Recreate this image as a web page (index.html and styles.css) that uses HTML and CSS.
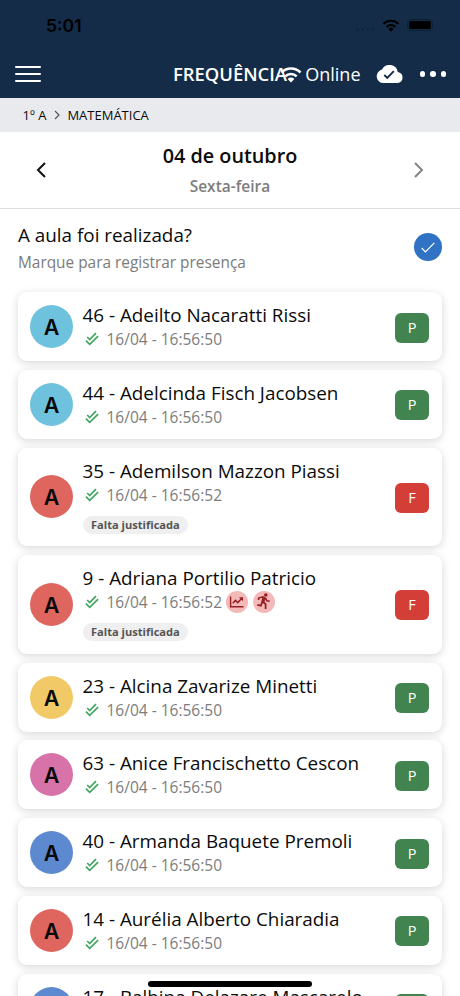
FILE: index.html
```html
<!DOCTYPE html>
<html lang="pt-BR">

<head>
    <meta charset="UTF-8">
    <meta name="viewport" content="width=device-width, initial-scale=1.0">
    <title>Frequência</title>
    <link rel="stylesheet" href="styles.css">
</head>

<body>
    <!-- Ícones reutilizados -->
    <svg class="sprite">
        <symbol id="wifi" viewBox="0 0 24 18">
            <path d="M1.6 6.8a14.6 14.6 0 0 1 20.8 0M5.8 11a8.8 8.8 0 0 1 12.4 0" fill="none" stroke="currentColor" stroke-width="2.8" />
            <path d="M12 17.6l-3.6-3.8a5 5 0 0 1 7.2 0z" fill="currentColor" />
        </symbol>
        <symbol id="done" viewBox="0 0 14 14">
            <path d="M2.2 5l2.5 2.5L11 1.2M.9 8.6l3.8 3.8 8.4-8.3" fill="none" stroke="#43a562" stroke-width="1.7" />
        </symbol>
    </svg>

    <header class="topbar">
        <div class="status">
            <span class="clock">5:01</span>
            <div class="status-icons">
                <span class="signal"><i></i><i></i><i></i><i></i></span>
                <svg class="status-wifi"><use href="#wifi" /></svg>
                <span class="battery"></span>
            </div>
        </div>
        <nav class="nav">
            <div class="menu"><span></span><span></span><span></span></div>
            <h1>FREQUÊNCIA</h1>
            <div class="actions">
                <svg class="wifi"><use href="#wifi" /></svg>
                <span class="online">Online</span>
                <svg class="cloud" viewBox="0 0 27 18">
                    <path d="M21.8 6.9A8.4 8.4 0 0 0 6 4.6 6.8 6.8 0 0 0 6.8 18H21.4a5.6 5.6 0 0 0 .4-11.1z" fill="#fff" />
                    <path d="M8.3 10l3 3 6.5-6.8" fill="none" stroke="#142c48" stroke-width="1.9" />
                </svg>
                <div class="more"><span></span><span></span><span></span></div>
            </div>
        </nav>
    </header>

    <div class="breadcrumb">
        <span>1º A</span>
        <svg viewBox="0 0 6 10"><path d="M1 1l4 4-4 4" /></svg>
        <span>MATEMÁTICA</span>
    </div>

    <section class="date">
        <svg class="prev" viewBox="0 0 10 16"><path d="M9 1L2 8l7 7" /></svg>
        <div class="date-text">
            <h2>04 de outubro</h2>
            <p>Sexta-feira</p>
        </div>
        <svg class="next" viewBox="0 0 10 16"><path d="M1 1l7 7-7 7" /></svg>
    </section>

    <section class="question">
        <div>
            <h3>A aula foi realizada?</h3>
            <p>Marque para registrar presença</p>
        </div>
        <div class="check">
            <svg viewBox="0 0 14 11"><path d="M.7 6l3.7 4L13.3.9" /></svg>
        </div>
    </section>

    <!-- Lista de alunos -->
    <main class="list">
        <div class="card">
            <div class="avatar cyan">A</div>
            <div class="info">
                <div class="name">46 - Adeilto Nacaratti Rissi</div>
                <div class="time"><svg class="done"><use href="#done" /></svg><span>16/04 - 16:56:50</span></div>
            </div>
            <div class="mark present">P</div>
        </div>
        <div class="card">
            <div class="avatar cyan">A</div>
            <div class="info">
                <div class="name">44 - Adelcinda Fisch Jacobsen</div>
                <div class="time"><svg class="done"><use href="#done" /></svg><span>16/04 - 16:56:50</span></div>
            </div>
            <div class="mark present">P</div>
        </div>
        <div class="card tall">
            <div class="avatar red">A</div>
            <div class="info">
                <div class="name">35 - Ademilson Mazzon Piassi</div>
                <div class="time"><svg class="done"><use href="#done" /></svg><span>16/04 - 16:56:52</span></div>
                <div class="tag">Falta justificada</div>
            </div>
            <div class="mark absent">F</div>
        </div>
        <div class="card tall">
            <div class="avatar red">A</div>
            <div class="info">
                <div class="name">9 - Adriana Portilio Patricio</div>
                <div class="time">
                    <svg class="done"><use href="#done" /></svg><span>16/04 - 16:56:52</span>
                    <div class="flags">
                        <svg viewBox="0 0 22 22">
                            <path d="M4.6 5.5v10.2h12.9" fill="none" stroke="#962024" stroke-width="1.4" />
                            <path d="M6.8 12.2l2.5-2.8 2.4 2.2 4-4.2" fill="none" stroke="#962024" stroke-width="1.5" />
                            <path d="M13 6.2h4v4z" fill="#962024" />
                        </svg>
                        <svg viewBox="0 0 22 22">
                            <circle cx="12.8" cy="4" r="1.8" fill="#962024" />
                            <path d="M5.6 9V7l4.3-1.2 2.7 1.6 1.3 2.4 2.8.5" fill="none" stroke="#962024" stroke-width="1.6" />
                            <path d="M9.4 6l3.2 1.5-1.3 4.2-3.1-.7z" fill="#962024" />
                            <path d="M9.4 10.7l3.2 2.2v5M9.2 11l-1.3 3.6-3.6-.7" fill="none" stroke="#962024" stroke-width="1.8" />
                        </svg>
                    </div>
                </div>
                <div class="tag">Falta justificada</div>
            </div>
            <div class="mark absent">F</div>
        </div>
        <div class="card">
            <div class="avatar yellow">A</div>
            <div class="info">
                <div class="name">23 - Alcina Zavarize Minetti</div>
                <div class="time"><svg class="done"><use href="#done" /></svg><span>16/04 - 16:56:50</span></div>
            </div>
            <div class="mark present">P</div>
        </div>
        <div class="card">
            <div class="avatar pink">A</div>
            <div class="info">
                <div class="name">63 - Anice Francischetto Cescon</div>
                <div class="time"><svg class="done"><use href="#done" /></svg><span>16/04 - 16:56:50</span></div>
            </div>
            <div class="mark present">P</div>
        </div>
        <div class="card">
            <div class="avatar blue">A</div>
            <div class="info">
                <div class="name">40 - Armanda Baquete Premoli</div>
                <div class="time"><svg class="done"><use href="#done" /></svg><span>16/04 - 16:56:50</span></div>
            </div>
            <div class="mark present">P</div>
        </div>
        <div class="card">
            <div class="avatar red">A</div>
            <div class="info">
                <div class="name">14 - Aurélia Alberto Chiaradia</div>
                <div class="time"><svg class="done"><use href="#done" /></svg><span>16/04 - 16:56:50</span></div>
            </div>
            <div class="mark present">P</div>
        </div>
        <div class="card">
            <div class="avatar blue"></div>
            <div class="info">
                <div class="name">17 - Balbina Delazare Mascarelo</div>
            </div>
            <div class="mark present"></div>
        </div>
    </main>

    <div class="home-indicator"></div>
</body>

</html>
```
FILE: styles.css
```css
* {
    box-sizing: border-box;
}

body {
    margin: 0;
    height: 996px;
    overflow: hidden;
    font-family: 'Open Sans', 'Noto Sans', sans-serif;
    background: #fff;
    color: #0b0b0b;
}

h1,
h2,
h3,
p {
    margin: 0;
}

svg {
    display: block;
    flex-shrink: 0;
}

.sprite {
    display: none;
}

/* Barra superior */
.topbar {
    height: 98px;
    background: #142c48;
    color: #fff;
}

.status {
    height: 50px;
    padding: 0 27px 0 46px;
    display: flex;
    justify-content: space-between;
    align-items: center;
    color: #000;
}

.clock {
    font-family: Inter, sans-serif;
    font-size: 17.5px;
    font-weight: 600;
    line-height: 22px;
    padding-top: 2px;
}

.status-icons {
    display: flex;
    align-items: center;
}

.signal {
    display: flex;
    gap: 2px;
    padding-top: 8px;
    margin-right: 8px;
}

.signal i {
    width: 3px;
    height: 3px;
    border-radius: 1px;
    background: #10253d;
}

.status-wifi {
    width: 18px;
    height: 13px;
    margin-right: 7px;
}

.battery {
    width: 26px;
    height: 12px;
    border: 1px solid #0d1f33;
    border-radius: 4px;
    padding: 1px;
    background: #000 content-box;
}

.nav {
    position: relative;
    height: 48px;
    padding: 0 14px 0 15px;
    display: flex;
    justify-content: space-between;
    align-items: center;
}

.menu {
    width: 26px;
    display: flex;
    flex-direction: column;
    gap: 5px;
}

.menu span {
    height: 2px;
    border-radius: 1px;
    background: #fff;
}

.nav h1 {
    position: absolute;
    left: 0;
    right: 0;
    top: 10px;
    text-align: center;
    font-size: 18.4px;
    font-weight: 600;
    line-height: 28px;
}

.actions {
    display: flex;
    align-items: center;
}

.wifi {
    width: 22px;
    height: 17px;
    margin-right: 3px;
}

.online {
    font-size: 18px;
    line-height: 28px;
    margin-right: 15px;
}

.cloud {
    width: 27px;
    height: 18px;
    margin-right: 17px;
}

.more {
    display: flex;
    gap: 5px;
}

.more span {
    width: 5.5px;
    height: 5.5px;
    border-radius: 50%;
    background: #fff;
}

.breadcrumb {
    height: 34px;
    padding-left: 22.5px;
    display: flex;
    align-items: center;
    background: #e9eaee;
    font-size: 13px;
}

.breadcrumb svg {
    width: 6px;
    height: 10px;
    margin: 0 7px 0 8px;
}

.breadcrumb path {
    fill: none;
    stroke: #555;
    stroke-width: 1.2;
}

/* Seletor de data */
.date {
    height: 77px;
    padding: 0 36px;
    display: flex;
    justify-content: space-between;
    align-items: center;
    border-bottom: 1px solid #dedede;
}

.date-text {
    text-align: center;
}

.date h2 {
    font-size: 19.8px;
    font-weight: 600;
    line-height: 28px;
}

.date p {
    margin-top: 4px;
    font-size: 15.5px;
    font-weight: 600;
    line-height: 24px;
    color: #7d7d7d;
}

.date svg {
    width: 10px;
    height: 16px;
}

.date path {
    fill: none;
    stroke: #111;
    stroke-width: 2;
}

.date .next path {
    stroke: #858585;
}

.question {
    height: 83px;
    padding: 12px 18px 0;
    display: flex;
    justify-content: space-between;
}

.question h3 {
    font-size: 18.85px;
    font-weight: 400;
    line-height: 28px;
}

.question p {
    font-size: 15.4px;
    line-height: 27px;
    color: #7b7b7b;
}

.check {
    width: 28px;
    height: 28px;
    margin-top: 12px;
    border-radius: 50%;
    background: #3072c4;
    display: flex;
    justify-content: center;
    align-items: center;
}

.check svg {
    width: 14px;
    height: 11px;
}

.check path {
    fill: none;
    stroke: #fff;
    stroke-width: 1.2;
}

/* Cartões */
.list {
    padding: 0 18px;
    display: flex;
    flex-direction: column;
    gap: 8.8px;
}

.card {
    height: 69px;
    flex-shrink: 0;
    padding: 0 13px 0 12px;
    display: flex;
    align-items: center;
    border-radius: 9px;
    background: #fff;
    box-shadow: 0 2px 8px rgba(0, 0, 0, 0.16);
}

.card.tall {
    height: 98.7px;
}

.avatar {
    width: 43px;
    height: 43px;
    border-radius: 50%;
    text-align: center;
    font-family: Inter, sans-serif;
    font-size: 21.5px;
    font-weight: 600;
    line-height: 44px;
    color: #0a0a0a;
}

.cyan {
    background: #6fc2dd;
}

.red {
    background: #df665f;
}

.yellow {
    background: #f1c966;
}

.pink {
    background: #d773a8;
}

.blue {
    background: #5c89d0;
}

.info {
    flex: 1;
    align-self: flex-start;
    padding: 10px 0 0 9.5px;
}

.name {
    font-size: 18.85px;
    line-height: 26px;
    white-space: nowrap;
}

.time {
    height: 22px;
    display: flex;
    align-items: center;
    font-size: 15.5px;
    color: #7d7d7d;
}

.done {
    width: 14px;
    height: 14px;
    margin: 0 8px 0 2px;
}

.flags {
    display: flex;
    gap: 5px;
    margin-left: 4px;
}

.flags svg {
    width: 22px;
    height: 22px;
    border-radius: 50%;
    background: #f3b9b8;
}

.tag {
    width: fit-content;
    height: 18px;
    margin-top: 10px;
    padding: 0 8.5px;
    border-radius: 9px;
    background: #efefef;
    font-size: 11.1px;
    font-weight: 700;
    line-height: 18px;
    color: #555;
}

.mark {
    width: 34px;
    height: 30px;
    margin-top: 2px;
    border-radius: 6px;
    text-align: center;
    font-size: 14.5px;
    line-height: 30px;
    color: #fff;
}

.present {
    background: #418450;
}

.absent {
    background: #d33e37;
}

.home-indicator {
    position: fixed;
    left: 148px;
    bottom: 9px;
    width: 164px;
    height: 6px;
    border-radius: 3px;
    background: #000;
}
```
